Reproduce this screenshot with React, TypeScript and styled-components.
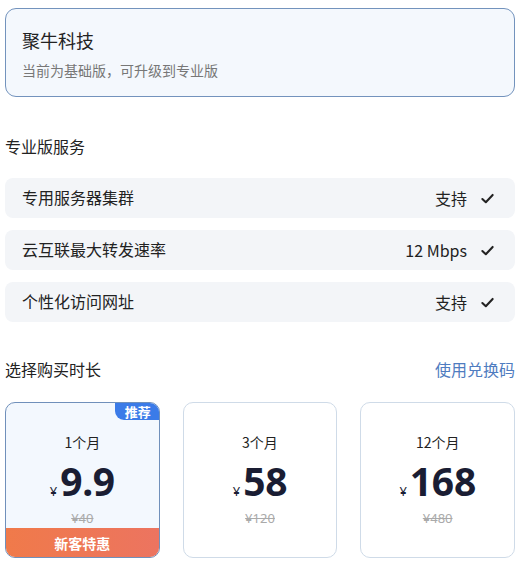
import React from "react";
import styled, { createGlobalStyle } from "styled-components";

const Global = createGlobalStyle`
  html, body { margin: 0; padding: 0; background: #fff; }
  body { font-family: "Noto Sans CJK SC", "Noto Sans", sans-serif; color: #222; }
  * { box-sizing: border-box; }
`;

const Page = styled.div`
  width: 521px;
  padding: 8px 6px 0 5px;
  display: flex;
  flex-direction: column;
`;

const InfoCard = styled.div`
  height: 89px;
  border: 1px solid #7393bd;
  border-radius: 11px;
  background: #f4f8fd;
  padding: 18px 16px 0;
  display: flex;
  flex-direction: column;
`;

const CompanyName = styled.div`
  font-size: 18px;
  line-height: 26px;
  color: #222;
`;

const Hint = styled.div`
  margin-top: 7px;
  font-size: 14px;
  line-height: 20px;
  color: #777;
`;

const SectionTitle = styled.div`
  margin-top: 38px;
  font-size: 16px;
  line-height: 22px;
  color: #222;
`;

const FeatureList = styled.div`
  margin-top: 21px;
  display: flex;
  flex-direction: column;
  gap: 12px;
`;

const FeatureRow = styled.div`
  height: 40px;
  border-radius: 8px;
  background: #f3f5f8;
  padding: 0 20px 0 17px;
  display: flex;
  align-items: center;
  justify-content: space-between;
  font-size: 16px;
  color: #222;
`;

const FeatureLabel = styled.span`
  margin-top: -3px;
`;

const FeatureValue = styled.span`
  display: flex;
  align-items: center;
  gap: 13px;
  font-size: 16px;
`;

const HeaderRow = styled.div`
  margin-top: 36px;
  display: flex;
  align-items: center;
  justify-content: space-between;
  font-size: 16px;
  line-height: 22px;
`;

const Link = styled.span`
  color: #4f7cc0;
`;

const PlanGrid = styled.div`
  margin-top: 22px;
  display: grid;
  grid-template-columns: repeat(3, 1fr);
  gap: 23px;
`;

const PlanCard = styled.div<{ $active?: boolean }>`
  position: relative;
  height: 156px;
  border-radius: 10px;
  border: 1px solid ${(p) => (p.$active ? "#7090bb" : "#cfdbe8")};
  background: ${(p) => (p.$active ? "#f3f8fe" : "#fff")};
  overflow: hidden;
  display: flex;
  flex-direction: column;
  align-items: center;
  padding-top: 29px;
`;

const Badge = styled.div`
  position: absolute;
  top: 0;
  right: 0;
  height: 17px;
  padding: 0 8px 0 10px;
  background: #3b7be8;
  color: #fff;
  font-size: 13px;
  font-weight: 700;
  line-height: 17px;
  border-bottom-left-radius: 9px;
`;

const Duration = styled.div`
  font-size: 14px;
  line-height: 20px;
  color: #222;
`;

const PriceLine = styled.div`
  margin-top: 6px;
  display: flex;
  align-items: baseline;
  gap: 3px;
  color: #1a1d33;
  height: 46px;
`;

const Currency = styled.span`
  font-size: 13px;
  font-family: "Noto Sans", sans-serif;
`;

const Amount = styled.span`
  font-family: "Noto Sans", "Open Sans", sans-serif;
  font-weight: 700;
  font-size: 39px;
  line-height: 46px;
  letter-spacing: -0.3px;
`;

const Original = styled.div`
  margin-top: 5px;
  font-size: 13px;
  line-height: 18px;
  color: #aaa;
  text-decoration: line-through;
  font-family: "Noto Sans", sans-serif;
`;

const Promo = styled.div`
  position: absolute;
  left: 0;
  right: 0;
  bottom: 0;
  height: 29px;
  background: linear-gradient(90deg, #f07a4a, #ec7460);
  color: #fff;
  font-size: 14px;
  font-weight: 700;
  display: flex;
  align-items: center;
  justify-content: center;
`;

const Check = () => (
  <svg width="15" height="15" viewBox="0 0 16 16" fill="none">
    <path d="M2.5 8.5 L6.2 12 L13.5 4.2" stroke="#222" strokeWidth="2.2" strokeLinecap="round" strokeLinejoin="round" />
  </svg>
);

const features = [
  { label: "专用服务器集群", value: "支持" },
  { label: "云互联最大转发速率", value: "12 Mbps" },
  { label: "个性化访问网址", value: "支持" },
];

const plans = [
  { dur: "1个月", price: "9.9", orig: "¥40", active: true },
  { dur: "3个月", price: "58", orig: "¥120" },
  { dur: "12个月", price: "168", orig: "¥480" },
];

export default function App() {
  return (
    <>
      <Global />
      <Page>
        <InfoCard>
          <CompanyName>聚牛科技</CompanyName>
          <Hint>当前为基础版，可升级到专业版</Hint>
        </InfoCard>
        <SectionTitle>专业版服务</SectionTitle>
        <FeatureList>
          {features.map((f) => (
            <FeatureRow key={f.label}>
              <FeatureLabel>{f.label}</FeatureLabel>
              <FeatureValue>
                {f.value}
                <Check />
              </FeatureValue>
            </FeatureRow>
          ))}
        </FeatureList>
        <HeaderRow>
          <span>选择购买时长</span>
          <Link>使用兑换码</Link>
        </HeaderRow>
        <PlanGrid>
          {plans.map((p) => (
            <PlanCard key={p.dur} $active={p.active}>
              {p.active && <Badge>推荐</Badge>}
              <Duration>{p.dur}</Duration>
              <PriceLine>
                <Currency>¥</Currency>
                <Amount>{p.price}</Amount>
              </PriceLine>
              <Original>{p.orig}</Original>
              {p.active && <Promo>新客特惠</Promo>}
            </PlanCard>
          ))}
        </PlanGrid>
      </Page>
    </>
  );
}
